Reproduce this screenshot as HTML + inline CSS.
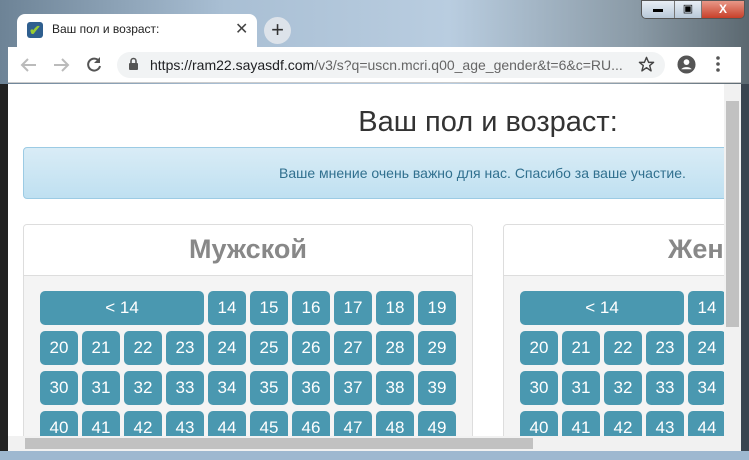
<!DOCTYPE html>
<html style="width:749px;height:460px;overflow:hidden"><head><meta charset="utf-8"><style>
*{margin:0;padding:0;box-sizing:border-box}
body{width:749px;height:460px;overflow:hidden;position:relative;font-family:"Liberation Sans",Arial,sans-serif;background:linear-gradient(90deg,#6d8396 0%,#a9bfd4 30%,#b9cde0 60%,#8a9aa6 85%,#5b6870 100%)}
.abs{position:absolute}
.tab{left:17px;top:14px;width:240px;height:34px;background:#fff;border-radius:8px 8px 0 0}
.toolbar{left:8px;top:47px;width:733px;height:36px;background:#fff;border-bottom:1px solid #ccc}
.addr{left:117px;top:52px;width:548px;height:26px;background:#f1f3f4;border-radius:13px;font-size:14px;color:#202124;line-height:26px;padding-left:33px}
.page{left:8px;top:84px;width:716px;height:352px;background:#fff;overflow:hidden}
.btn{position:absolute;height:34px;background:#4a98b0;border-radius:5px;color:#fff;font-size:17px;text-align:center;line-height:34px}
.panel{position:absolute;top:140px;width:450px;height:260px;border:1px solid #ddd;border-radius:4px;background:#f4f4f4;overflow:hidden}
.ph{height:51px;background:#fff;border-bottom:1px solid #ddd;font-size:27px;font-weight:bold;color:#888;text-align:center;line-height:49px}
</style></head><body>
<div class="abs" style="left:641px;top:0;width:104px;height:19px;border-radius:0 0 5px 5px;overflow:hidden;display:flex;border:1px solid #555">
<div style="width:32px;background:linear-gradient(#e8eef5,#b8c8d8);text-align:center;font-size:10px;line-height:17px">▬</div>
<div style="width:27px;background:linear-gradient(#e8eef5,#b8c8d8);border-left:1px solid #777;text-align:center;font-size:11px;line-height:17px">▣</div>
<div style="flex:1;background:linear-gradient(#e89888,#c8402a);border-left:1px solid #777;color:#fff;text-align:center;font-weight:bold;font-size:12px;line-height:17px">X</div></div>
<div class="abs tab"></div>
<div class="abs" style="left:27px;top:22px;width:16px;height:16px;background:#2f5f8f;border-radius:3px;color:#9c3;font-size:14px;line-height:16px;text-align:center;font-weight:bold">✔</div>
<div class="abs" style="left:52px;top:22px;font-size:12px;color:#222">Ваш пол и возраст:</div>
<div class="abs" style="left:235px;top:19px;font-size:16px;color:#444">✕</div>
<div class="abs" style="left:264px;top:17px;width:27px;height:27px;border-radius:50%;background:#dde3ea;text-align:center;font-size:22px;line-height:26px;color:#333">+</div>
<div class="abs toolbar"></div>
<svg class="abs" style="left:20px;top:57px" width="18" height="16" viewBox="0 0 18 16"><path d="M16 8H3M8 2L2 8l6 6" stroke="#bbb" stroke-width="2" fill="none"/></svg>
<svg class="abs" style="left:52px;top:57px" width="18" height="16" viewBox="0 0 18 16"><path d="M2 8h13M10 2l6 6-6 6" stroke="#bbb" stroke-width="2" fill="none"/></svg>
<svg class="abs" style="left:85px;top:56px" width="18" height="18" viewBox="0 0 18 18"><path d="M14 5A6 6 0 1 0 15 10" stroke="#555" stroke-width="2" fill="none"/><path d="M15 1v6H9z" fill="#555"/></svg>
<div class="abs addr"><span style="color:#202124">https://ram22.sayasdf.com</span><span style="color:#666">/v3/s?q=uscn.mcri.q00_age_gender&amp;t=6&amp;c=RU...</span></div>
<svg class="abs" style="left:128px;top:57px" width="11" height="14" viewBox="0 0 11 14"><path d="M3 6V4a2.5 2.5 0 0 1 5 0v2" stroke="#555" stroke-width="1.6" fill="none"/><rect x="1" y="6" width="9" height="7" rx="1" fill="#555"/></svg>
<svg class="abs" style="left:638px;top:56px" width="17" height="17" viewBox="0 0 24 24"><path d="M12 2l3 7h7l-5.5 4.5 2 7.5L12 16.5 5.5 21l2-7.5L2 9h7z" stroke="#444" stroke-width="2" fill="none" stroke-linejoin="round"/></svg>
<svg class="abs" style="left:677px;top:55px" width="19" height="19" viewBox="0 0 20 20"><circle cx="10" cy="10" r="9.5" fill="#555"/><circle cx="10" cy="7.5" r="3" fill="#fff"/><path d="M4.5 15c2-3 9-3 11 0" fill="#fff"/></svg>
<svg class="abs" style="left:716px;top:56px" width="4" height="16" viewBox="0 0 4 16"><circle cx="2" cy="2" r="1.8" fill="#555"/><circle cx="2" cy="8" r="1.8" fill="#555"/><circle cx="2" cy="14" r="1.8" fill="#555"/></svg>
<div class="abs page">
<div class="abs" style="left:0;top:22px;width:960px;text-align:center;font-size:29px;color:#333">Ваш пол и возраст:</div>
<div class="abs" style="left:15px;top:63px;width:720px;height:52px;border:1px solid #9ccbe4;border-radius:4px;background:linear-gradient(#d9ecf6,#bfe0f1);color:#31708f;font-size:14px;line-height:50px;padding-left:255px">Ваше мнение очень важно для нас. Спасибо за ваше участие.</div>
<div class="panel" style="left:15px"><div class="ph">Мужской</div></div>
<div class="panel" style="left:495px"><div class="ph" style="text-align:left;padding-left:164px">Женский</div></div>
<div id="g"></div>
</div>
<div class="abs" style="left:724px;top:84px;width:17px;height:352px;background:#f1f1f1"></div>
<div class="abs" style="left:726px;top:101px;width:13px;height:226px;background:#c1c1c1"></div>
<div class="abs" style="left:8px;top:436px;width:733px;height:15px;background:#f1f1f1"></div>
<div class="abs" style="left:25px;top:438px;width:508px;height:11px;background:#c1c1c1"></div>
<div class="abs" style="left:0;top:84px;width:8px;height:376px;background:#222"></div>
<div class="abs" style="left:741px;top:84px;width:8px;height:376px;background:#3a4550"></div>
<div class="abs" style="left:0;top:451px;width:749px;height:9px;background:#9eb8d0"></div>
<script>
var g=document.getElementById('g'),h='';
[32,512].forEach(function(ox){
 var yy=207;
 h+='<div class="btn" style="left:'+ox+'px;top:'+yy+'px;width:164px">&lt; 14</div>';
 for(var i=0;i<6;i++)h+='<div class="btn" style="left:'+(ox+168+42*i)+'px;top:'+yy+'px;width:38px">'+(14+i)+'</div>';
 for(var r=0;r<3;r++)for(var c=0;c<10;c++)h+='<div class="btn" style="left:'+(ox+42*c)+'px;top:'+(yy+40*(r+1))+'px;width:38px">'+(20+r*10+c)+'</div>';
});
g.innerHTML=h;
</script>
</body></html>
